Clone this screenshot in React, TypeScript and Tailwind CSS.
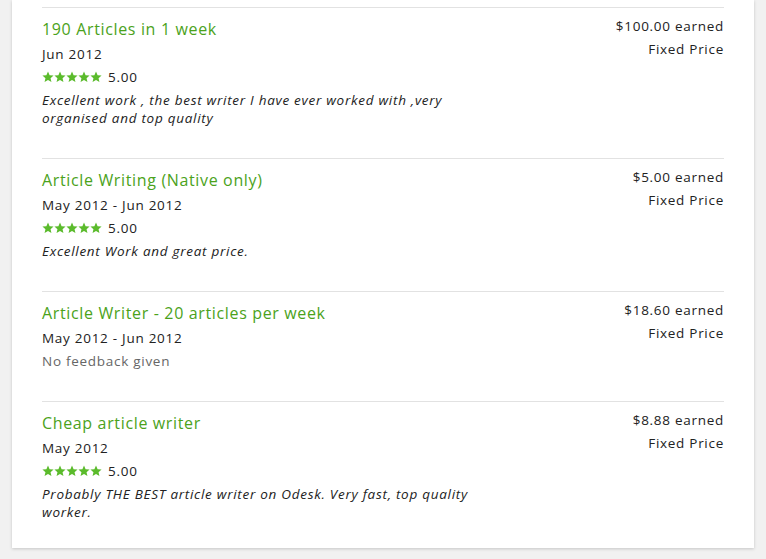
import React from "react";

type Item = {
  title: string;
  date: string;
  rating?: string;
  feedback?: string;
  earned: string;
};

const items: Item[] = [
  {
    title: "190 Articles in 1 week",
    date: "Jun 2012",
    rating: "5.00",
    feedback:
      "Excellent work , the best writer I have ever worked with ,very organised and top quality",
    earned: "$100.00 earned",
  },
  {
    title: "Article Writing (Native only)",
    date: "May 2012 - Jun 2012",
    rating: "5.00",
    feedback: "Excellent Work and great price.",
    earned: "$5.00 earned",
  },
  {
    title: "Article Writer - 20 articles per week",
    date: "May 2012 - Jun 2012",
    earned: "$18.60 earned",
  },
  {
    title: "Cheap article writer",
    date: "May 2012",
    rating: "5.00",
    feedback:
      "Probably THE BEST article writer on Odesk. Very fast, top quality worker.",
    earned: "$8.88 earned",
  },
];

function Star() {
  return (
    <svg width="12" height="12" viewBox="0 0 24 24" className="block">
      <path
        fill="#5bbb2c"
        d="M12 1l3.2 7.3 7.9.7-6 5.3 1.8 7.8L12 18l-6.9 4.1 1.8-7.8-6-5.3 7.9-.7z"
      />
    </svg>
  );
}

function Row({ item, last }: { item: Item; last: boolean }) {
  return (
    <div
      className={`flex justify-between border-t border-[#e2e2e2] pt-[11px] ${
        last ? "pb-[27px]" : "pb-[31px]"
      }`}
    >
      <div className="w-[462px]">
        <div className="text-[16px] leading-[20px] font-medium text-[#4ba21b] tracking-[0.65px]">
          {item.title}
        </div>
        <div className="mt-[6px] text-[13.5px] leading-[18px] tracking-[0.72px] text-[#222]">
          {item.date}
        </div>
        {item.rating ? (
          <>
            <div className="mt-[5px] flex items-center text-[13.5px] leading-[18px] tracking-[0.72px] text-[#222]">
              <div className="flex gap-[0px]">
                <Star />
                <Star />
                <Star />
                <Star />
                <Star />
              </div>
              <span className="ml-[6px]">{item.rating}</span>
            </div>
            <div className="mt-[5px] text-[13.5px] leading-[18px] italic tracking-[0.72px] text-[#222]">
              {item.feedback}
            </div>
          </>
        ) : (
          <div className="mt-[5px] text-[13.5px] leading-[18px] tracking-[0.72px] text-[#666]">
            No feedback given
          </div>
        )}
      </div>
      <div className="-mt-[2px] text-right text-[13.5px] leading-[18px] tracking-[0.72px] text-[#222]">
        <div>{item.earned}</div>
        <div className="mt-[5px]">Fixed Price</div>
      </div>
    </div>
  );
}

export default function App() {
  return (
    <div
      className="min-h-[559px] w-[766px] bg-[#f1f1f1] pl-[12px]"
      style={{ fontFamily: '"Open Sans", "Liberation Sans", sans-serif' }}
    >
      <div className="w-[742px] bg-white px-[30px] pt-[7px] shadow-[0_1px_3px_rgba(0,0,0,0.18)]">
        {items.map((it, i) => (
          <Row key={i} item={it} last={i === items.length - 1} />
        ))}
      </div>
    </div>
  );
}
